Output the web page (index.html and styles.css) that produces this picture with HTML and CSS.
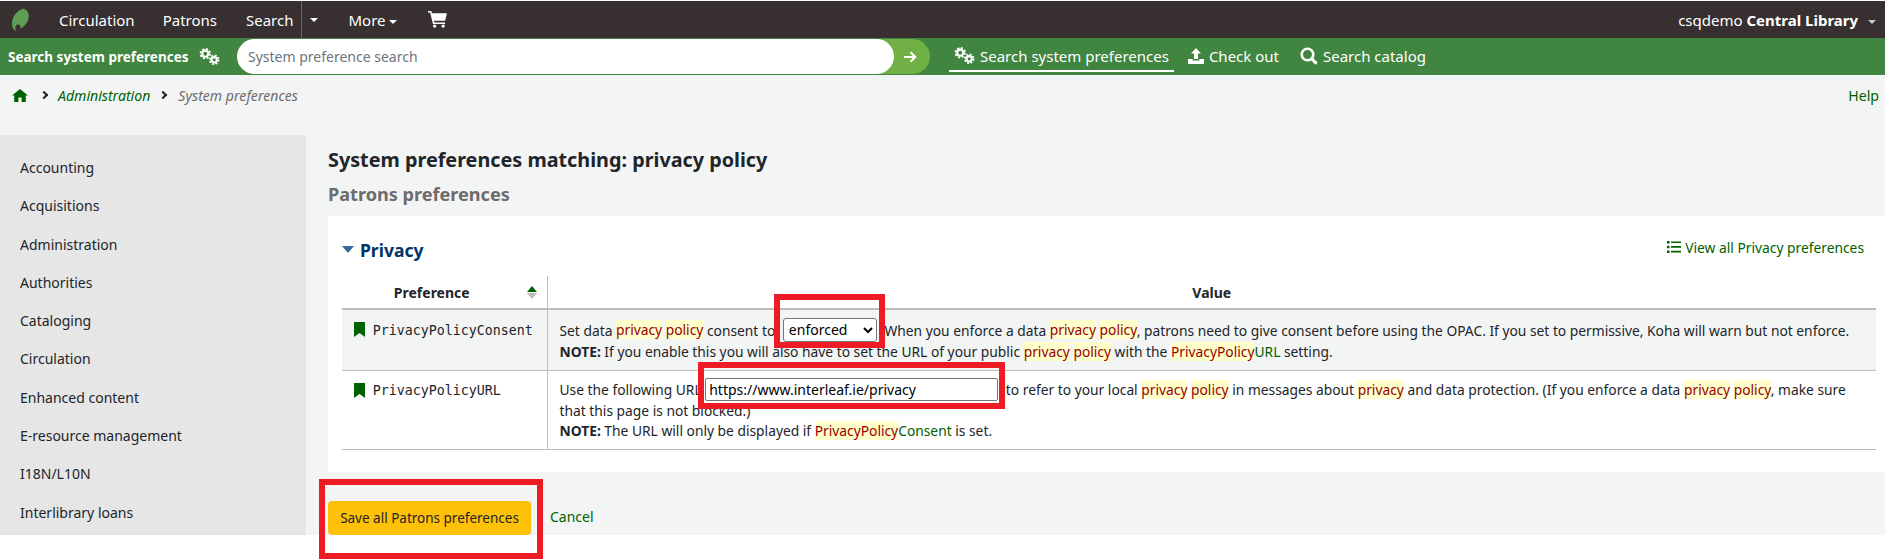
FILE: index.html
```html
<!DOCTYPE html>
<html lang="en">

<head>
    <meta charset="UTF-8">
    <title>System preferences</title>
    <link rel="stylesheet" href="styles.css">
</head>

<body>
    <svg class="icon-defs" width="0" height="0">
        <defs>
            <symbol id="gears" viewBox="0 0 22 18">
                <circle cx="6.5" cy="6" r="3.2" fill="none" stroke="currentColor" stroke-width="2.2"/>
                <circle cx="6.5" cy="6" r="5" fill="none" stroke="currentColor" stroke-width="2" stroke-dasharray="2.2 1.73"/>
                <circle cx="16" cy="12.5" r="2.8" fill="none" stroke="currentColor" stroke-width="2.2"/>
                <circle cx="16" cy="12.5" r="4.6" fill="none" stroke="currentColor" stroke-width="2" stroke-dasharray="2 1.61"/>
            </symbol>
            <symbol id="bookmark" viewBox="0 0 11 15">
                <path d="M0 0h11v15L5.5 11 0 15z" fill="currentColor"/>
            </symbol>
        </defs>
    </svg>

    <nav class="topbar">
        <svg class="logo" viewBox="0 0 20 24">
            <path d="M13 0C6 2 1 9 1 16c0 4 2 7 5 8-2-2-2-5 0-7 2-1 4 0 4 2 0 1-1 2-2 2 4 0 8-4 10-9 2-6 0-10-5-12z" fill="#5f9d55"/>
        </svg>
        <a class="topbar-link first" href="#">Circulation</a>
        <a class="topbar-link" href="#">Patrons</a>
        <a class="topbar-link search-link" href="#">Search</a>
        <span class="split-caret"><i class="caret"></i></span>
        <a class="topbar-link more-link" href="#">More <i class="caret"></i></a>
        <svg class="cart" viewBox="0 0 20 18">
            <path d="M0 0h3.4l.7 2.4H20l-2 8H6.3l.4 1.8H18v1.6H5.2L2.2 1.6H0z" fill="#fff"/>
            <circle cx="7" cy="16" r="1.8" fill="#fff"/>
            <circle cx="16" cy="16" r="1.8" fill="#fff"/>
        </svg>
        <div class="user-menu">
            <span>csqdemo</span> <strong>Central Library</strong>
            <i class="caret dim"></i>
        </div>
    </nav>

    <div class="searchbar">
        <div class="search-label">
            <span>Search system preferences</span>
            <svg class="gears-icon"><use href="#gears"/></svg>
        </div>
        <div class="search-field">
            <input class="search-input" type="text" placeholder="System preference search">
            <button class="search-go" type="button">
                <svg viewBox="0 0 14 14" width="14" height="14">
                    <path d="M1 7h11M7.5 2.2 12.2 7l-4.7 4.8" fill="none" stroke="#fff" stroke-width="2.2"/>
                </svg>
            </button>
        </div>
        <ul class="search-tabs">
            <li class="active">
                <svg class="gears-icon"><use href="#gears"/></svg>
                Search system preferences
            </li>
            <li>
                <svg class="tab-icon" viewBox="0 0 16 16">
                    <path d="M8 0l5 5.5H10V11H6V5.5H3zM0 11h4.6v1.6h6.8V11H16v5H0z" fill="#fff"/>
                </svg>
                Check out
            </li>
            <li>
                <svg class="tab-icon search-icon" viewBox="0 0 18 18">
                    <circle cx="7.5" cy="7.5" r="5.8" fill="none" stroke="#fff" stroke-width="2.6"/>
                    <path d="M11.8 11.8 16.6 16.6" stroke="#fff" stroke-width="3.2"/>
                </svg>
                Search catalog
            </li>
        </ul>
    </div>

    <div class="page">
        <div class="breadcrumbs">
            <svg class="home-icon" viewBox="0 0 16 13">
                <path d="M8 0l8 6.6h-2.2V13H9.6V8.6H6.4V13H2.2V6.6H0z" fill="#006100"/>
            </svg>
            <i class="chevron first"></i>
            <a href="#">Administration</a>
            <i class="chevron"></i>
            <span>System preferences</span>
            <a class="help" href="#">Help</a>
        </div>

        <div class="columns">
            <aside class="sidebar">
                <ul>
                    <li>Accounting</li>
                    <li>Acquisitions</li>
                    <li>Administration</li>
                    <li>Authorities</li>
                    <li>Cataloging</li>
                    <li>Circulation</li>
                    <li>Enhanced content</li>
                    <li>E-resource management</li>
                    <li>I18N/L10N</li>
                    <li>Interlibrary loans</li>
                </ul>
            </aside>

            <main class="content">
                <h1>System preferences matching: privacy policy</h1>
                <h2>Patrons preferences</h2>

                <section class="panel">
                    <div class="panel-head">
                        <h3><i class="section-caret"></i>Privacy</h3>
                        <a class="view-all" href="#">
                            <svg viewBox="0 0 14 12" width="14" height="12">
                                <path d="M0 0h2.5v2.5H0zM4 .4h10v1.7H4zM0 4.7h2.5v2.5H0zM4 5.1h10v1.7H4zM0 9.4h2.5v2.5H0zM4 9.8h10v1.7H4z" fill="#006100"/>
                            </svg>
                            View all Privacy preferences
                        </a>
                    </div>

                    <table class="prefs">
                        <thead>
                            <tr>
                                <th class="col-pref">
                                    Preference
                                    <span class="sort"><i class="sort-up"></i><i class="sort-down"></i></span>
                                </th>
                                <th>Value</th>
                            </tr>
                        </thead>
                        <tbody>
                            <tr class="shaded row-consent">
                                <td class="pref-name">
                                    <svg class="bookmark"><use href="#bookmark"/></svg>
                                    <code>PrivacyPolicyConsent</code>
                                </td>
                                <td class="pref-value">
                                    Set data <mark>privacy</mark> <mark>policy</mark> consent to
                                    <span class="marked mark-select">
                                        <select>
                                            <option>enforced</option>
                                            <option>permissive</option>
                                        </select>
                                    </span>
                                    When you enforce a data <mark>privacy</mark> <mark>policy</mark>, patrons need to give consent before using the OPAC. If you set to permissive, Koha will warn but not enforce.<br>
                                    <strong>NOTE:</strong> If you enable this you will also have to set the URL of your public <mark>privacy</mark> <mark>policy</mark> with the <mark>PrivacyPolicy</mark><a href="#">URL</a> setting.
                                </td>
                            </tr>
                            <tr class="row-url">
                                <td class="pref-name">
                                    <svg class="bookmark"><use href="#bookmark"/></svg>
                                    <code>PrivacyPolicyURL</code>
                                </td>
                                <td class="pref-value">
                                    Use the following URL
                                    <span class="marked mark-url">
                                        <input class="url-input" type="text" value="https://www.interleaf.ie/privacy">
                                    </span>
                                    to refer to your local <mark>privacy</mark> <mark>policy</mark> in messages about <mark>privacy</mark> and data protection. (If you enforce a data <mark>privacy</mark> <mark>policy</mark>, make sure<br>
                                    that this page is not blocked.)<br>
                                    <strong>NOTE:</strong> The URL will only be displayed if <mark>PrivacyPolicy</mark><a href="#">Consent</a> is set.
                                </td>
                            </tr>
                        </tbody>
                    </table>
                </section>

                <div class="save-bar">
                    <span class="marked mark-save">
                        <button class="save-btn" type="button">Save all Patrons preferences</button>
                    </span>
                    <a class="cancel" href="#">Cancel</a>
                </div>
            </main>
        </div>
    </div>
</body>

</html>
```

FILE: styles.css
```css
* {
    box-sizing: border-box;
}

html {
    overflow: hidden;
}

body {
    margin: 0;
    padding-top: 1px;
    min-height: 560px;
    background-color: #FFFFFF;
    color: #212529;
    font-family: "Noto Sans", "Open Sans", sans-serif;
    font-size: 14px;
}

a {
    color: #006100;
    text-decoration: none;
}

ul {
    list-style: none;
    margin: 0;
    padding: 0;
}

.icon-defs {
    position: absolute;
}

/* top nav */
.topbar {
    display: flex;
    align-items: center;
    height: 37px;
    padding-left: 11px;
    background-color: #382F30;
    color: #FFFFFF;
    font-size: 15px;
}

.logo {
    width: 19px;
    height: 24px;
}

.topbar-link {
    color: #FFFFFF;
    margin-left: 28px;
}

.topbar-link.first {
    margin-left: 29px;
}

.topbar-link.search-link {
    margin-left: 29px;
}

.split-caret {
    display: flex;
    align-items: center;
    justify-content: center;
    width: 25px;
    height: 37px;
    margin-left: 8px;
    border-left: 1px solid #408540;
}

.more-link {
    margin-left: 22px;
}

.cart {
    width: 19px;
    height: 17px;
    margin-left: 31px;
    margin-bottom: 1px;
}

.caret {
    display: inline-block;
    width: 0;
    height: 0;
    border-top: 4px solid #FFFFFF;
    border-left: 4px solid transparent;
    border-right: 4px solid transparent;
    vertical-align: 2px;
}

.caret.dim {
    margin-left: 6px;
    border-top-color: #CCCCCC;
}

.user-menu {
    margin-left: auto;
    padding-right: 9px;
}

/* green search bar */
.searchbar {
    display: flex;
    align-items: center;
    height: 37px;
    background-color: #408540;
    color: #FFFFFF;
}

.search-label {
    display: flex;
    align-items: center;
    width: 237px;
    padding-left: 8px;
    font-size: 13.5px;
    font-weight: bold;
}

.gears-icon {
    width: 21px;
    height: 17px;
    color: #FFFFFF;
}

.search-label .gears-icon {
    margin-left: 10px;
}

.search-field {
    display: flex;
    width: 693px;
    height: 35px;
}

.search-input {
    position: relative;
    z-index: 1;
    flex: 1;
    height: 35px;
    margin: 0;
    padding: 0 0 0 11px;
    border: 0;
    border-radius: 18px;
    background-color: #FFFFFF;
    font-family: inherit;
    font-size: 14px;
    outline: none;
}

.search-input::placeholder {
    color: #6C757D;
}

.search-go {
    display: flex;
    align-items: center;
    justify-content: center;
    width: 54px;
    height: 35px;
    margin-left: -18px;
    padding: 0 0 0 14px;
    border: 0;
    border-radius: 0 18px 18px 0;
    background-color: #6FAF44;
}

.search-tabs {
    display: flex;
    align-items: center;
    margin-left: 19px;
    font-size: 15px;
}

.search-tabs li {
    display: flex;
    align-items: center;
    height: 31px;
    padding: 0 5px 1px;
    margin-right: 9px;
    gap: 5px;
}

.search-tabs li + li + li {
    margin-left: 2px;
}

.search-tabs li.active {
    padding-bottom: 0;
    border-bottom: 2px solid #FFFFFF;
}

.tab-icon {
    width: 16px;
    height: 16px;
}

.search-icon {
    width: 18px;
    height: 18px;
}

/* page */
.page {
    background-color: #F3F4F4;
    height: 460px;
}

.breadcrumbs {
    display: flex;
    align-items: center;
    height: 60px;
    padding: 0 6px 20px 12px;
    font-style: italic;
    font-size: 14.1px;
    color: #6C6C6C;
}

.home-icon {
    width: 16px;
    height: 13px;
}

.chevron {
    display: inline-block;
    width: 6px;
    height: 6px;
    margin: 0 12px 0 10px;
    border-top: 2px solid #222222;
    border-right: 2px solid #222222;
    transform: rotate(45deg);
}

.chevron.first {
    margin: 0 11px 0 13px;
}

.help {
    margin-left: auto;
    font-style: normal;
}

.columns {
    display: flex;
    height: 400px;
}

.sidebar {
    flex: none;
    width: 306px;
    height: 400px;
    padding-top: 14px;
    background-color: #E6E6E6;
}

.sidebar li {
    height: 38.3px;
    line-height: 38.3px;
    padding-left: 20px;
    font-size: 14px;
}

.content {
    flex: 1;
    min-width: 0;
    margin-left: 22px;
}

h1 {
    margin: 0;
    padding-top: 10px;
    height: 41px;
    line-height: 29px;
    font-size: 19.8px;
    font-weight: bold;
}

h2 {
    margin: 0;
    height: 40px;
    line-height: 36px;
    font-size: 18.1px;
    font-weight: bold;
    color: #6C6C6C;
}

.panel {
    height: 256px;
    padding: 0 9px 0 14px;
    background-color: #FFFFFF;
}

.panel-head {
    display: flex;
    align-items: center;
    justify-content: space-between;
    height: 60px;
    padding-right: 12px;
}

h3 {
    display: flex;
    align-items: center;
    margin: 0;
    padding-top: 7px;
    font-size: 17.5px;
    font-weight: bold;
    color: #003366;
}

.section-caret {
    width: 0;
    height: 0;
    margin-right: 6px;
    border-top: 7px solid #38689F;
    border-left: 6px solid transparent;
    border-right: 6px solid transparent;
}

.view-all {
    display: flex;
    align-items: center;
    gap: 4px;
    padding-top: 2px;
    font-size: 13.8px;
}

.prefs {
    width: 100%;
    border-collapse: collapse;
    table-layout: fixed;
}

.prefs th {
    position: relative;
    height: 33px;
    padding: 0;
    border-bottom: 2px solid #BCBCBC;
    font-size: 14px;
    font-weight: bold;
}

.prefs th.col-pref {
    width: 205px;
    padding-right: 25px;
    border-right: 1px solid #BCBCBC;
}

.sort {
    position: absolute;
    right: 10px;
    top: 10px;
    display: flex;
    flex-direction: column;
    gap: 1px;
}

.sort i {
    width: 0;
    height: 0;
    border-left: 5px solid transparent;
    border-right: 5px solid transparent;
}

.sort-up {
    border-bottom: 6px solid #006100;
}

.sort-down {
    border-top: 6px solid #BCBCBC;
}

.prefs td {
    padding: 0;
    border-bottom: 1px solid #BCBCBC;
}

.shaded td {
    background-color: #F3F4F4;
}

.row-consent td {
    height: 61px;
}

.row-url td {
    height: 79px;
}

.prefs td.pref-name {
    vertical-align: top;
    padding: 10px 0 0 12px;
    border-right: 1px solid #BCBCBC;
    white-space: nowrap;
}

.row-url .pref-name code {
    position: relative;
    top: -1px;
}

.bookmark {
    width: 11px;
    height: 15px;
    margin-right: 4px;
    color: #006100;
    vertical-align: -2px;
}

code {
    font-family: "DejaVu Sans Mono", "Liberation Mono", monospace;
    font-size: 13.3px;
}

.prefs td.pref-value {
    padding-left: 12px;
    font-size: 13.8px;
    line-height: 20px;
    white-space: nowrap;
}

mark {
    background-color: #FFFFCC;
    color: #990000;
}

.mark-select {
    margin: 0 4px;
}

.mark-url {
    margin-right: 4px;
}

select {
    width: 94px;
    height: 24px;
    padding: 0 0 0 1px;
    border: 1px solid #767676;
    border-radius: 3px;
    background-color: #FFFFFF;
    font-family: inherit;
    font-size: 14px;
}

.url-input {
    width: 293px;
    height: 23px;
    padding: 0 3px;
    border: 1px solid #767676;
    border-radius: 2px;
    font-family: inherit;
    font-size: 14px;
}

/* red annotation boxes drawn over the screenshot */
.marked {
    position: relative;
    display: inline-block;
}

.marked::after {
    content: "";
    position: absolute;
    border: 6px solid #ED1C24;
    pointer-events: none;
}

.mark-select::after {
    left: -9px;
    right: -8px;
    top: -24px;
    bottom: -6px;
}

.mark-url::after {
    left: -7px;
    right: -7px;
    top: -16px;
    bottom: -8px;
}

.mark-save::after {
    left: -9px;
    right: -12px;
    top: -22px;
    bottom: -24px;
}

.save-bar {
    display: flex;
    align-items: center;
    margin-top: 29px;
    height: 34px;
}

.save-btn {
    display: block;
    width: 203px;
    height: 34px;
    padding: 0;
    border: 0;
    border-radius: 4px;
    background-color: #FFC107;
    color: #212529;
    font-family: inherit;
    font-size: 13.5px;
}

.cancel {
    margin-left: 19px;
    margin-bottom: 4px;
}
```
